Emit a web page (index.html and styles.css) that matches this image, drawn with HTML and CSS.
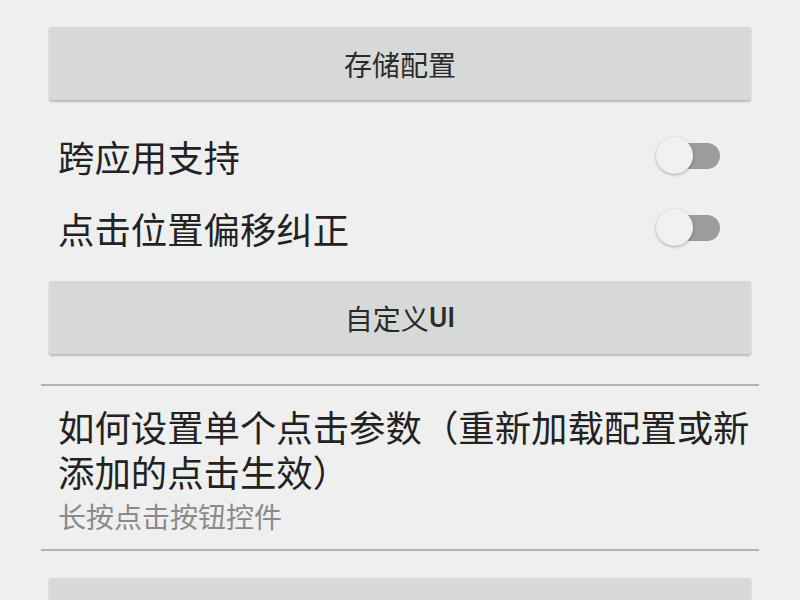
FILE: index.html
```html
<!DOCTYPE html>
<html lang="zh-CN">
<head>
<meta charset="utf-8">
<title>设置</title>
<link rel="stylesheet" href="styles.css">
</head>
<body>
<div class="page">
  <div class="btn btn-first">存储配置</div>

  <div class="toggle-row row-first">
    <span class="label">跨应用支持</span>
    <span class="switch"><span class="track"></span><span class="thumb"></span></span>
  </div>
  <div class="toggle-row">
    <span class="label">点击位置偏移纠正</span>
    <span class="switch"><span class="track"></span><span class="thumb"></span></span>
  </div>

  <div class="btn btn-second">自定义<span class="latin">UI</span></div>

  <div class="divider divider-first"></div>
  <div class="info">
    <div class="info-title">如何设置单个点击参数（重新加载配置或新添加的点击生效）</div>
    <div class="info-sub">长按点击按钮控件</div>
  </div>
  <div class="divider"></div>

  <div class="btn btn-third"></div>
</div>
</body>
</html>
```

FILE: styles.css
```css
html, body {
  margin: 0;
  padding: 0;
  background: #efefef;
  overflow: hidden;
}

body {
  font-family: "Noto Sans CJK SC", "Noto Sans", sans-serif;
  color: #222;
}

.page {
  width: 800px;
  height: 600px;
  box-sizing: border-box;
  padding: 27px 41px 0 41px;
  display: flex;
  flex-direction: column;
  overflow: hidden;
}

.btn {
  margin: 0 8px;
  height: 73px;
  flex: none;
  background: #d7d8d8;
  border-radius: 3px;
  box-shadow: 0 2px 2px rgba(0, 0, 0, 0.22), 0 0 1px rgba(0, 0, 0, 0.08);
  display: flex;
  align-items: center;
  justify-content: center;
  font-size: 28px;
  color: #2a2a2a;
}

.btn .latin {
  font-family: "Roboto", "Noto Sans", sans-serif;
  font-weight: 500;
  font-size: 28px;
}

.toggle-row {
  height: 72px;
  flex: none;
  display: flex;
  align-items: center;
  justify-content: space-between;
  padding: 0 39px 0 17px;
}

.row-first {
  margin-top: 20px;
}

.toggle-row .label {
  font-size: 36.4px;
  line-height: 1;
  color: #222;
}

.switch {
  position: relative;
  width: 64px;
  height: 38px;
  flex: none;
}

.switch .track {
  position: absolute;
  right: 0;
  top: 6px;
  width: 58px;
  height: 26px;
  border-radius: 13px;
  background: #9c9c9c;
}

.switch .thumb {
  position: absolute;
  left: 0;
  top: 0;
  width: 37px;
  height: 37px;
  border-radius: 50%;
  background: #f1f1f1;
  box-shadow: 0 1px 3px rgba(0, 0, 0, 0.3);
}

.btn-second {
  margin-top: 17px;
}

.divider {
  height: 2px;
  flex: none;
  background: #b4b4b4;
}

.divider-first {
  margin-top: 30px;
}

.info {
  padding: 18px 0 15px 17px;
}

.info-title {
  font-size: 36.4px;
  line-height: 45px;
  color: #222;
}

.info-sub {
  font-size: 28px;
  line-height: 36px;
  margin-top: 4px;
  color: #8a8a8a;
}

.btn-third {
  margin-top: 27px;
}
```
